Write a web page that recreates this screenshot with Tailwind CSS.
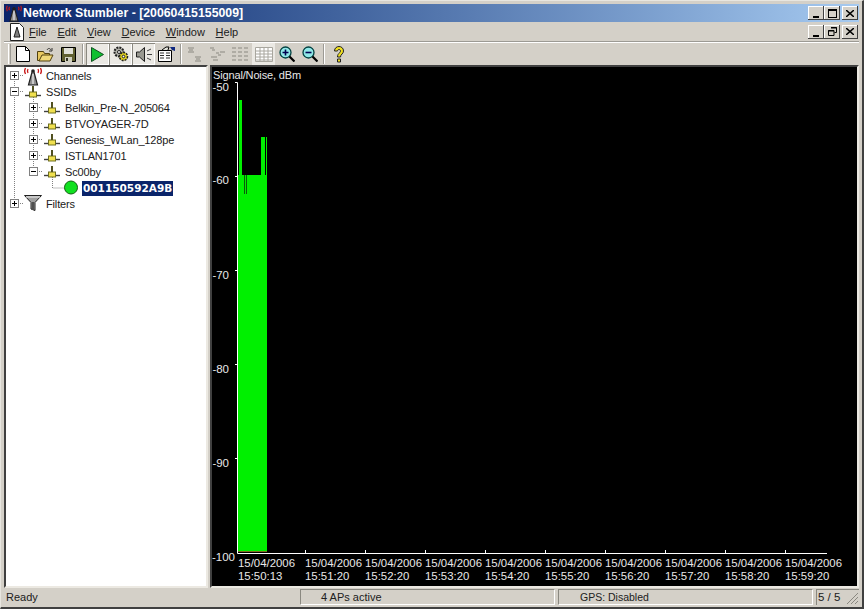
<!DOCTYPE html>
<html lang="en">
<head>
  <meta charset="UTF-8" />
  <title>Network Stumbler</title>
  <script src="https://cdn.jsdelivr.net/npm/@tailwindcss/browser@4"></script>
</head>
<body class="w-[864px] h-[609px] overflow-hidden bg-[#d4d0c8] font-['Liberation_Sans',sans-serif] text-[11px] text-black">

  <svg width="0" height="0" class="absolute">
    <defs>
      <symbol id="antenna" viewBox="0 0 20 20">
        <path d="M2.500 8a6 6 0 0 1 0-6M5 7a4 4 0 0 1 0-4M17.500 8a6 6 0 0 0 0-6M15 7a4 4 0 0 0 0-4" fill="none" stroke="#c81818" stroke-width="1.300"/>
        <circle cx="10" cy="5" r="1.800" fill="#202020"/>
        <path d="M9 6h2l3.500 13h-9z" fill="#909090" stroke="#202020" stroke-width="1.200"/>
        <path d="M10 8v10" stroke="#f0f0f0" stroke-width="1.200"/>
      </symbol>
      <symbol id="ssid" viewBox="0 0 16 16">
        <path d="M0 11.500h16" stroke="#404040" stroke-width="1.400"/>
        <rect x="4.500" y="8" width="7" height="5" fill="#f0e050" stroke="#707020"/>
        <path d="M8 2v6" stroke="#505020" stroke-width="2"/>
      </symbol>
      <symbol id="filter" viewBox="0 0 18 18">
        <path d="M.5 1.500h17l-6.500 7v8l-4-1.500V8.500z" fill="#a0a0a0" stroke="#202020"/>
        <path d="M2 3h14" stroke="#f0f0f0"/>
        <path d="M9 8v8" stroke="#505050" stroke-width="2"/>
      </symbol>
    </defs>
  </svg>

  <div class="flex flex-col h-full border-t border-l border-r-[2px] border-b-[2px] border-t-[#e8e6e0] border-l-[#e8e6e0] border-r-[#404040] border-b-[#404040] pt-[3px] px-[3px] pb-[2px]">

    <!-- Title bar -->
    <header class="h-[18px] shrink-0 flex items-center bg-gradient-to-r from-[#0a246a] to-[#a6caf0] pr-[1px]">
      <svg width="18" height="18" class="shrink-0 ml-[1px]"><use href="#antenna"/></svg>
      <span class="font-['Liberation_Sans',sans-serif] font-bold text-[12.300px] text-white whitespace-nowrap">Network Stumbler - [20060415155009]</span>
      <div class="ml-auto flex items-center">
        <button class="w-[16px] h-[14px] flex items-end justify-center pb-[2px] bg-[#d4d0c8] shadow-[inset_-1px_-1px_0_#404040,inset_1px_1px_0_#fff]"><span class="w-[6px] h-[2px] bg-black"></span></button>
        <button class="w-[16px] h-[14px] flex items-center justify-center bg-[#d4d0c8] shadow-[inset_-1px_-1px_0_#404040,inset_1px_1px_0_#fff]"><span class="w-[9px] h-[9px] border border-t-2 border-black"></span></button>
        <button class="ml-[2px] w-[16px] h-[14px] flex items-center justify-center bg-[#d4d0c8] shadow-[inset_-1px_-1px_0_#404040,inset_1px_1px_0_#fff]">
          <svg width="8" height="7"><path d="M0 0l8 7M8 0L0 7" stroke="#000" stroke-width="1.500"/></svg>
        </button>
      </div>
    </header>

    <!-- Menu bar -->
    <nav class="h-[20px] shrink-0 flex items-center pr-[1px] border-b border-[#9c9a94]">
      <svg width="16" height="18" viewBox="0 0 16 18" class="ml-[5px] shrink-0">
        <path d="M1.500 .5h9l4 4v13h-13z" fill="#fff" stroke="#202020"/>
        <path d="M8 4l3 10H5z" fill="#808080" stroke="#202020"/>
      </svg>
      <ul class="flex ml-[4px] pt-[2px] gap-[10.700px] text-[#202020]">
        <li><span class="underline">F</span>ile</li>
        <li><span class="underline">E</span>dit</li>
        <li><span class="underline">V</span>iew</li>
        <li><span class="underline">D</span>evice</li>
        <li><span class="underline">W</span>indow</li>
        <li><span class="underline">H</span>elp</li>
      </ul>
      <div class="ml-auto flex items-center">
        <button class="w-[16px] h-[14px] flex items-end justify-center pb-[2px] shadow-[inset_-1px_-1px_0_#404040,inset_1px_1px_0_#fff]"><span class="w-[6px] h-[2px] bg-black"></span></button>
        <button class="w-[16px] h-[14px] flex items-center justify-center shadow-[inset_-1px_-1px_0_#404040,inset_1px_1px_0_#fff]">
          <svg width="9" height="9"><path d="M3 .5h5.500v5h-2M.5 3.500h5.500v5h-5.500z" fill="none" stroke="#000"/><path d="M3 1h6M0 4h6" stroke="#000"/></svg>
        </button>
        <button class="ml-[2px] w-[16px] h-[14px] flex items-center justify-center shadow-[inset_-1px_-1px_0_#404040,inset_1px_1px_0_#fff]">
          <svg width="8" height="7"><path d="M0 0l8 7M8 0L0 7" stroke="#000" stroke-width="1.500"/></svg>
        </button>
      </div>
    </nav>

    <!-- Toolbar -->
    <div class="h-[23px] shrink-0 flex items-center pl-[4px] border-t border-white">
      <span class="w-[3px] h-[20px] border-l border-r border-l-white border-r-[#9c9a94]"></span>
      <button class="w-[23px] h-[22px] flex items-center justify-center">
        <svg width="14" height="16"><path d="M.5.5h9l4 4v11H.5z" fill="#fff" stroke="#000"/><path d="M9.500.5v4h4" fill="none" stroke="#000"/></svg>
      </button>
      <button class="w-[23px] h-[22px] flex items-center justify-center">
        <svg width="17" height="15"><path d="M.5 4.500h6l1 2h5v7H.5z" fill="#e8c860" stroke="#504010"/><path d="M2 14l3-6h11l-3 6z" fill="#f0d878" stroke="#504010"/><path d="M10 3c1-2 3-2 4 0M15 1v3h-3" fill="none" stroke="#303030"/></svg>
      </button>
      <button class="w-[23px] h-[22px] flex items-center justify-center">
        <svg width="15" height="15"><path d="M.5.5h14v14H.5z" fill="#606030" stroke="#000"/><path d="M3 1h9v6H3z" fill="#e0e0d8"/><path d="M4 10h7v5H4z" fill="#d0d0c0"/><path d="M5 11h2v3H5z" fill="#303020"/></svg>
      </button>
      <span class="w-[2px] h-[20px] border-l border-r border-l-[#9c9a94] border-r-white mx-[2px]"></span>
      <button class="w-[23px] h-[22px] flex items-center justify-center bg-[#ebe9e4] shadow-[inset_1px_1px_0_#8a8880,inset_-1px_-1px_0_#fff]">
        <svg width="13" height="15"><path d="M.5 .5l12 7-12 7z" fill="#10c030" stroke="#105020"/></svg>
      </button>
      <button class="w-[23px] h-[22px] flex items-center justify-center bg-[#ebe9e4] shadow-[inset_1px_1px_0_#8a8880,inset_-1px_-1px_0_#fff]">
        <svg width="16" height="16"><circle cx="6" cy="6" r="4.500" fill="#b0b0a8" stroke="#202020" stroke-width="2" stroke-dasharray="2 1"/><circle cx="6" cy="6" r="1.500" fill="#fff" stroke="#202020"/><circle cx="10.500" cy="10.500" r="4" fill="#e0d020" stroke="#202020" stroke-width="1.500" stroke-dasharray="2 1"/><circle cx="10.500" cy="10.500" r="1.300" fill="#fff" stroke="#202020"/></svg>
      </button>
      <button class="w-[23px] h-[22px] flex items-center justify-center bg-[#ebe9e4] shadow-[inset_1px_1px_0_#8a8880,inset_-1px_-1px_0_#fff]">
        <svg width="16" height="15"><path d="M.5 5h3l5-4.500v14l-5-4.500h-3z" fill="#989890" stroke="#202020"/><path d="M11 4l4-2M11 7.500h5M11 11l4 2" stroke="#404040"/></svg>
      </button>
      <button class="w-[23px] h-[22px] flex items-center justify-center">
        <svg width="18" height="16"><path d="M.5 4.500h13v11H.5z" fill="#fff" stroke="#000"/><path d="M2 7h4M2 9.500h4M2 12h4M8 7h4M8 9.500h4M8 12h4" stroke="#303030"/><path d="M4 4l4-3h3l-1 3" fill="#e0e0d8" stroke="#000"/><path d="M12 1l5 0v4l-3-1z" fill="#102880"/></svg>
      </button>
      <span class="w-[2px] h-[20px] border-l border-r border-l-[#9c9a94] border-r-white ml-[2px] mr-[1px]"></span>
      <button class="w-[23px] h-[22px] flex items-center justify-center">
        <svg width="16" height="15"><path d="M1 1h6M2 3h4M8 10h6M9 12h4" stroke="#8a8880"/><path d="M1 5h6M8 14h6" stroke="#8a8880"/></svg>
      </button>
      <button class="w-[23px] h-[22px] flex items-center justify-center">
        <svg width="16" height="14"><path d="M0 1h4M2 3h3M10 5h5M6 6h3M1 10h6M8 8h3M3 13h5" stroke="#8a8880"/></svg>
      </button>
      <button class="w-[23px] h-[22px] flex items-center justify-center">
        <svg width="18" height="14"><path d="M0 1h4M6 1h4M12 1h4M0 5h4M6 5h4M12 5h4M0 9h4M6 9h4M12 9h4M0 13h4M6 13h4M12 13h4" stroke="#8a8880"/></svg>
      </button>
      <button class="w-[23px] h-[22px] flex items-center justify-center bg-[#ebe9e4]">
        <svg width="18" height="15"><path d="M.5.500h17v14H.5z" fill="#fff" stroke="#a8a69e"/><path d="M1 4h16M1 7h16M1 10h16M1 13h16M5 1v13M9 1v13M13 1v13" stroke="#a8a69e"/></svg>
      </button>
      <button class="w-[23px] h-[22px] flex items-center justify-center">
        <svg width="16" height="16"><circle cx="6.500" cy="6.500" r="5.500" fill="#90e8e8" stroke="#004040" stroke-width="1.300"/><path d="M3.500 6.500h6M6.500 3.500v6" stroke="#000050" stroke-width="1.600"/><path d="M10.500 10.500l5 5" stroke="#000" stroke-width="2.200"/></svg>
      </button>
      <button class="w-[23px] h-[22px] flex items-center justify-center">
        <svg width="16" height="16"><circle cx="6.500" cy="6.500" r="5.500" fill="#90e8e8" stroke="#004040" stroke-width="1.300"/><path d="M3.500 6.500h6" stroke="#000050" stroke-width="1.600"/><path d="M10.500 10.500l5 5" stroke="#000" stroke-width="2.200"/></svg>
      </button>
      <span class="w-[2px] h-[20px] border-l border-r border-l-[#9c9a94] border-r-white mx-[2px]"></span>
      <button class="w-[23px] h-[22px] flex items-center justify-center">
        <svg width="12" height="17"><path d="M1.500 5c0-6 9-6 9 0 0 3-3 3-3 6H4.500c0-4 3-4 3-6 0-2-3-2-3 0z" fill="#f0e020" stroke="#202020"/><path d="M4.500 13h3v3h-3z" fill="#f0e020" stroke="#202020"/></svg>
      </button>
    </div>

    <!-- Panes -->
    <main class="flex-1 min-h-0 flex">
      <section class="relative w-[204px] shrink-0 bg-white border-2 border-t-[#404040] border-l-[#404040] border-r-[#ece9e2] border-b-[#ece9e2] overflow-hidden">
        <svg width="90" height="150" class="absolute left-[2px] top-0 block">
          <g fill="none" stroke="#808080" stroke-dasharray="1 1">
            <path d="M6.500 8v130M25.500 24v81M44.500 104v17h12M10 8.500h6M10 24.500h6M10 136.500h6M29 40.500h6M29 56.500h6M29 72.500h6M29 88.500h6M29 104.500h6"/>
          </g>
          <g fill="#fff" stroke="#808080">
            <rect x="2.500" y="4.500" width="8" height="8"/><rect x="2.500" y="20.500" width="8" height="8"/><rect x="2.500" y="132.500" width="8" height="8"/>
            <rect x="21.500" y="36.500" width="8" height="8"/><rect x="21.500" y="52.500" width="8" height="8"/><rect x="21.500" y="68.500" width="8" height="8"/><rect x="21.500" y="84.500" width="8" height="8"/><rect x="21.500" y="100.500" width="8" height="8"/>
          </g>
          <path d="M4 8.500h5M6.500 6v5M4 24.500h5M4 136.500h5M6.500 134v5M23 40.500h5M25.500 38v5M23 56.500h5M25.500 54v5M23 72.500h5M25.500 70v5M23 88.500h5M25.500 86v5M23 104.500h5" stroke="#000"/>
          <use href="#antenna" x="15" y="-1" width="20" height="20"/>
          <use href="#ssid" x="17" y="17" width="16" height="16"/>
          <use href="#ssid" x="36" y="33" width="16" height="16"/>
          <use href="#ssid" x="36" y="49" width="16" height="16"/>
          <use href="#ssid" x="36" y="65" width="16" height="16"/>
          <use href="#ssid" x="36" y="81" width="16" height="16"/>
          <use href="#ssid" x="36" y="97" width="16" height="16"/>
          <circle cx="63" cy="120.500" r="6.500" fill="#10e020" stroke="#106010"/>
          <use href="#filter" x="16" y="127" width="18" height="18"/>
        </svg>
        <ul class="relative pt-[1px] leading-4 text-[#202020] whitespace-nowrap tracking-[-0.15px]">
          <li class="h-4 pl-[40px]">Channels</li>
          <li class="h-4 pl-[40px]">SSIDs</li>
          <li class="h-4 pl-[59px]">Belkin_Pre-N_205064</li>
          <li class="h-4 pl-[59px]">BTVOYAGER-7D</li>
          <li class="h-4 pl-[59px]">Genesis_WLan_128pe</li>
          <li class="h-4 pl-[59px]">ISTLAN1701</li>
          <li class="h-4 pl-[59px]">Sc00by</li>
          <li class="h-4 pl-[76px]"><span class="inline-block h-[15px] leading-[15px] px-[1px] bg-[#0a246a] text-white font-bold tracking-normal font-['DejaVu_Sans',sans-serif] text-[10.500px]">001150592A9B</span></li>
          <li class="h-4 pl-[40px]">Filters</li>
        </ul>
      </section>

      <section class="ml-[2px] flex-1 min-w-0 bg-black border-2 border-t-[#404040] border-l-[#404040] border-r-[#ece9e2] border-b-[#ece9e2] overflow-hidden">
        <!-- viewBox keeps screen coordinates for the plot -->
        <svg width="645" height="520" viewBox="212 67 645 520" class="block font-['Liberation_Sans',sans-serif]">
          <g fill="#e8e8e8" font-size="11">
            <text x="213" y="79" letter-spacing="-0.15">Signal/Noise, dBm</text>
            <g text-anchor="end" font-size="11.500">
              <text x="229" y="91">-50</text>
              <text x="229" y="184">-60</text>
              <text x="229" y="279">-70</text>
              <text x="229" y="373">-80</text>
              <text x="229" y="467">-90</text>
              <text x="235" y="561">-100</text>
            </g>
          </g>
          <path d="M235 82.500h2.500V553.500H827M235 176.500h2M235 270.500h2M235 364.500h2M235 458.500h2M305.500 550v3M365.500 550v3M425.500 550v3M485.500 550v3M545.500 550v3M605.500 550v3M665.500 550v3M725.500 550v3M785.500 550v3" fill="none" stroke="#fff"/>
          <path d="M238 175h29v376h-29zM239 100h3v75h-3zM261 137h4v38h-4zM266 137h1v38h-1z" fill="#00f000"/>
          <path d="M244 175h1v19h-1zM246 175h1v19h-1z" fill="#0a5a0a"/>
          <path d="M238 551h29v1h-29z" fill="#807020"/>
          <g fill="#e8e8e8" font-size="11.400">
            <text x="238" y="567">15/04/2006</text><text x="238" y="580">15:50:13</text>
            <text x="305" y="567">15/04/2006</text><text x="305" y="580">15:51:20</text>
            <text x="365" y="567">15/04/2006</text><text x="365" y="580">15:52:20</text>
            <text x="425" y="567">15/04/2006</text><text x="425" y="580">15:53:20</text>
            <text x="485" y="567">15/04/2006</text><text x="485" y="580">15:54:20</text>
            <text x="545" y="567">15/04/2006</text><text x="545" y="580">15:55:20</text>
            <text x="605" y="567">15/04/2006</text><text x="605" y="580">15:56:20</text>
            <text x="665" y="567">15/04/2006</text><text x="665" y="580">15:57:20</text>
            <text x="725" y="567">15/04/2006</text><text x="725" y="580">15:58:20</text>
            <text x="785" y="567">15/04/2006</text><text x="785" y="580">15:59:20</text>
          </g>
        </svg>
      </section>
    </main>

    <!-- Status bar -->
    <footer class="h-[16px] shrink-0 flex items-stretch text-[#202020] leading-[15px] mt-[1px]">
      <div class="w-[296px] pl-[2px] pt-[1px]">Ready</div>
      <div class="w-[255px] pl-[20px] border border-t-[#8a8880] border-l-[#8a8880] border-r-white border-b-white">4 APs active</div>
      <div class="ml-[3px] w-[255px] pl-[21px] border border-t-[#8a8880] border-l-[#8a8880] border-r-white border-b-white text-[10.500px]">GPS: Disabled</div>
      <div class="ml-[3px] flex-1 pl-[1px] border-l border-t border-[#8a8880] relative text-[11.500px]">5 / 5
        <svg width="13" height="13" class="absolute right-0 bottom-0"><path d="M12 1L1 12M12 5L5 12M12 9L9 12" stroke="#8a8880"/></svg>
      </div>
    </footer>
  </div>
</body>
</html>
